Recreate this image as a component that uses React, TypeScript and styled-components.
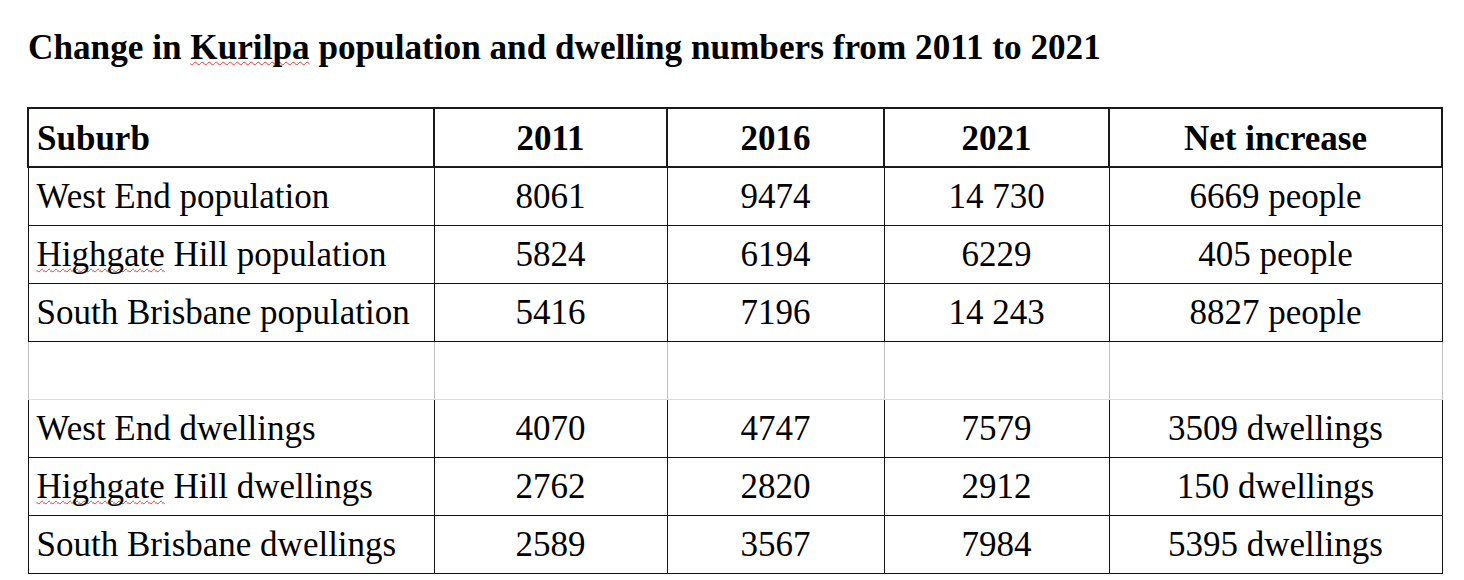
import React from 'react'
import styled, {createGlobalStyle} from 'styled-components'

const GlobalStyle = createGlobalStyle`
	html, body {
		margin: 0;
		padding: 0;
		background: #ffffff;
	}
	body {
		font-family: 'Liberation Serif', 'Times New Roman', serif;
		color: #000000;
	}
`

type rowTypes = {
	suburb: string
	values: string[]
	increase: string
	squiggle?: string
}

const populationRows: rowTypes[] = [
	{suburb: 'West End population', values: ['8061', '9474', '14 730'], increase: '6669 people'},
	{suburb: 'Highgate Hill population', squiggle: 'Highgate', values: ['5824', '6194', '6229'], increase: '405 people'},
	{suburb: 'South Brisbane population', values: ['5416', '7196', '14 243'], increase: '8827 people'},
]

const dwellingRows: rowTypes[] = [
	{suburb: 'West End dwellings', values: ['4070', '4747', '7579'], increase: '3509 dwellings'},
	{suburb: 'Highgate Hill dwellings', squiggle: 'Highgate', values: ['2762', '2820', '2912'], increase: '150 dwellings'},
	{suburb: 'South Brisbane dwellings', values: ['2589', '3567', '7984'], increase: '5395 dwellings'},
]

const columnWidths = [406, 233, 217, 225, 333]

const SuburbLabel = ({row}: {row: rowTypes}) => {
	if (!row.squiggle) return <>{row.suburb}</>
	const rest = row.suburb.slice(row.squiggle.length)
	return (
		<>
			<Misspelt>{row.squiggle}</Misspelt>
			{rest}
		</>
	)
}

const DataRow = ({row}: {row: rowTypes}) => (
	<tr>
		<BodyCell>
			<SuburbLabel row={row} />
		</BodyCell>
		{row.values.map((v, i) => (
			<BodyCell key={i} center>
				{v}
			</BodyCell>
		))}
		<BodyCell center>{row.increase}</BodyCell>
	</tr>
)

const App = () => {
	return (
		<Page>
			<GlobalStyle />
			<Title>
				Change in <Misspelt>Kurilpa</Misspelt> population and dwelling numbers from 2011 to 2021
			</Title>
			<Table>
				<colgroup>
					{columnWidths.map((w, i) => (
						<col key={i} style={{width: w}} />
					))}
				</colgroup>
				<thead>
					<tr>
						<HeadCell>Suburb</HeadCell>
						<HeadCell center>2011</HeadCell>
						<HeadCell center>2016</HeadCell>
						<HeadCell center>2021</HeadCell>
						<HeadCell center>Net increase</HeadCell>
					</tr>
				</thead>
				<tbody>
					{populationRows.map((row) => (
						<DataRow key={row.suburb} row={row} />
					))}
					<tr>
						{columnWidths.map((_, i) => (
							<SpacerCell key={i} />
						))}
					</tr>
					{dwellingRows.map((row) => (
						<DataRow key={row.suburb} row={row} />
					))}
				</tbody>
			</Table>
		</Page>
	)
}

export default App

const Page = styled.main`
	padding: 28px 0 0 27px;
	width: 1436px;
	box-sizing: border-box;
`

const Title = styled.h1`
	margin: 0 0 39px 1px;
	font-size: 35.2px;
	line-height: 40px;
	font-weight: 700;
`

const Misspelt = styled.span`
	text-decoration: underline wavy #e83a3a;
	text-decoration-thickness: 1px;
	text-underline-offset: 2px;
	text-decoration-skip-ink: none;
`

const Table = styled.table`
	width: 1414px;
	table-layout: fixed;
	border-collapse: collapse;
	font-size: 35px;
`

const HeadCell = styled.th<{center?: boolean}>`
	height: 59px;
	padding: 2px 8px 0;
	border: 2px solid #1a1a1a;
	font-weight: 700;
	text-align: ${(p) => (p.center ? 'center' : 'left')};
	box-sizing: border-box;
`

const BodyCell = styled.td<{center?: boolean}>`
	height: 58px;
	padding: 2px 8px 0;
	border: 1px solid #111111;
	text-align: ${(p) => (p.center ? 'center' : 'left')};
	white-space: nowrap;
	box-sizing: border-box;
`

const SpacerCell = styled.td`
	height: 58px;
	padding: 0;
	border-left: 1px solid #c0c0c0;
	border-right: 1px solid #c0c0c0;
	border-bottom: 1px solid #dcdcdc;
	box-sizing: border-box;
`
